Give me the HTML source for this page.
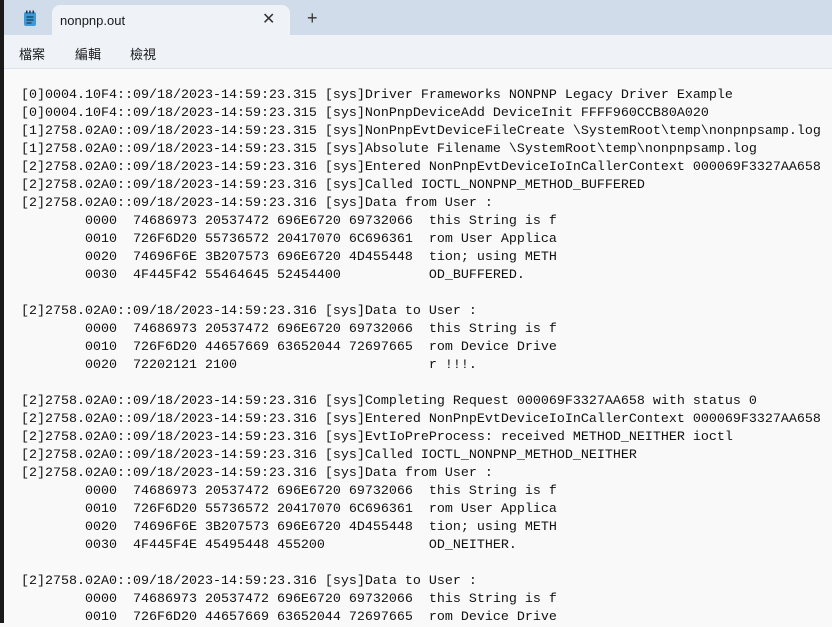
<!DOCTYPE html>
<html><head><meta charset="utf-8"><style>
body{margin:0;width:832px;height:623px;overflow:hidden;background:#f9f9f9;position:relative;font-family:"Liberation Sans","Noto Sans CJK TC",sans-serif}
.strip{position:absolute;left:0;top:0;width:4px;height:623px;background:#1a1a1a}
.tabbar{position:absolute;left:4px;top:0;right:0;height:35px;background:#d0dcea}
.tab{position:absolute;left:48px;top:5px;width:238px;height:31px;background:#eff3f8;border-radius:8px 8px 0 0}
.tab span{position:absolute;left:8px;top:8px;font-size:13px;color:#1a1a1a}
.x{position:absolute;left:210px;top:4px;font-size:16px;color:#333}
.plus{position:absolute;left:303px;top:8px;font-size:18px;color:#333}
.menu{position:absolute;left:4px;top:35px;right:0;height:33px;background:#eff3f8;border-bottom:1px solid #dde3ea;font-size:13px;color:#1a1a1a}
.menu span{position:absolute;top:9px}
pre{position:absolute;left:21px;top:87px;margin:0;font-family:"Liberation Mono",monospace;font-size:13.33px;line-height:18px;color:#111}
</style></head><body>
<div class="strip"></div>
<div class="tabbar">
<svg style="position:absolute;left:19px;top:10px" width="14" height="17" viewBox="0 0 14 17"><rect x="1" y="2" width="12" height="14" rx="2" fill="#3d9ad6"/><rect x="3" y="0.5" width="1.5" height="3" fill="#235"/><rect x="6.2" y="0.5" width="1.5" height="3" fill="#235"/><rect x="9.5" y="0.5" width="1.5" height="3" fill="#235"/><path d="M3.5 7h7M3.5 10h7M3.5 13h5" stroke="#123" stroke-width="1"/></svg>
<div class="tab"><span>nonpnp.out</span><div class="x">✕</div></div>
<div class="plus">+</div>
</div>
<div class="menu"><span style="left:15px">檔案</span><span style="left:71px">編輯</span><span style="left:126px">檢視</span></div>
<pre>[0]0004.10F4::09/18/2023-14:59:23.315 [sys]Driver Frameworks NONPNP Legacy Driver Example
[0]0004.10F4::09/18/2023-14:59:23.315 [sys]NonPnpDeviceAdd DeviceInit FFFF960CCB80A020
[1]2758.02A0::09/18/2023-14:59:23.315 [sys]NonPnpEvtDeviceFileCreate \SystemRoot\temp\nonpnpsamp.log
[1]2758.02A0::09/18/2023-14:59:23.315 [sys]Absolute Filename \SystemRoot\temp\nonpnpsamp.log
[2]2758.02A0::09/18/2023-14:59:23.316 [sys]Entered NonPnpEvtDeviceIoInCallerContext 000069F3327AA658
[2]2758.02A0::09/18/2023-14:59:23.316 [sys]Called IOCTL_NONPNP_METHOD_BUFFERED
[2]2758.02A0::09/18/2023-14:59:23.316 [sys]Data from User :
        0000  74686973 20537472 696E6720 69732066  this String is f
        0010  726F6D20 55736572 20417070 6C696361  rom User Applica
        0020  74696F6E 3B207573 696E6720 4D455448  tion; using METH
        0030  4F445F42 55464645 52454400           OD_BUFFERED.

[2]2758.02A0::09/18/2023-14:59:23.316 [sys]Data to User :
        0000  74686973 20537472 696E6720 69732066  this String is f
        0010  726F6D20 44657669 63652044 72697665  rom Device Drive
        0020  72202121 2100                        r !!!.

[2]2758.02A0::09/18/2023-14:59:23.316 [sys]Completing Request 000069F3327AA658 with status 0
[2]2758.02A0::09/18/2023-14:59:23.316 [sys]Entered NonPnpEvtDeviceIoInCallerContext 000069F3327AA658
[2]2758.02A0::09/18/2023-14:59:23.316 [sys]EvtIoPreProcess: received METHOD_NEITHER ioctl
[2]2758.02A0::09/18/2023-14:59:23.316 [sys]Called IOCTL_NONPNP_METHOD_NEITHER
[2]2758.02A0::09/18/2023-14:59:23.316 [sys]Data from User :
        0000  74686973 20537472 696E6720 69732066  this String is f
        0010  726F6D20 55736572 20417070 6C696361  rom User Applica
        0020  74696F6E 3B207573 696E6720 4D455448  tion; using METH
        0030  4F445F4E 45495448 455200             OD_NEITHER.

[2]2758.02A0::09/18/2023-14:59:23.316 [sys]Data to User :
        0000  74686973 20537472 696E6720 69732066  this String is f
        0010  726F6D20 44657669 63652044 72697665  rom Device Drive
</pre>
</body></html>
